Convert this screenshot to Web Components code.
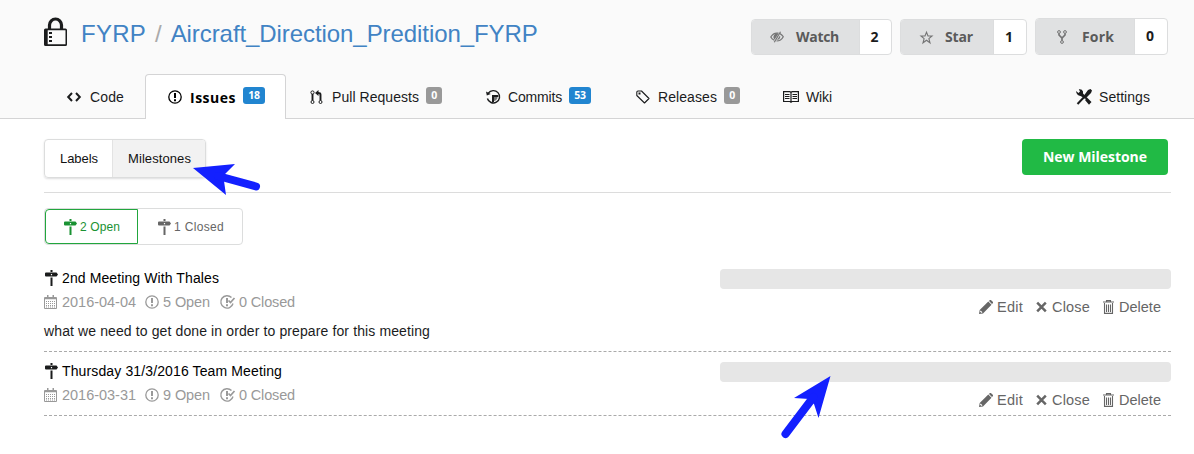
<!DOCTYPE html>
<html lang="en"><head><meta charset="utf-8"><title>Milestones</title>
<style>body{margin:0;background:#fff;font-family:"Liberation Sans",Arial,sans-serif;color:#1b1c1d;overflow:hidden}</style></head>
<body><milestones-page></milestones-page>
<script>
const define=(name,html,setup)=>customElements.define(name,class extends HTMLElement{
  connectedCallback(){
    if(this.shadowRoot)return;
    const t=document.createElement('template');t.innerHTML=html;
    this.attachShadow({mode:'open'}).append(t.content.cloneNode(true));
    if(setup)setup(this,this.shadowRoot);
  }
});
const ring='<circle cx="7" cy="7" r="6.2" fill="none" stroke="currentColor" stroke-width="1.3"/>';
const icons={
lock:[23,29,'<path d="M5.500 12V8a6 6 0 0 1 12 0V12" fill="none" stroke="currentColor" stroke-width="3.200"/><path fill-rule="evenodd" d="M1.500 11.500h20a1.500 1.500 0 0 1 1.500 1.500v14.500a1.500 1.500 0 0 1-1.500 1.500h-20a1.500 1.500 0 0 1-1.500-1.500V13a1.500 1.500 0 0 1 1.500-1.500zM3.700 13.200v14h17.800v-14z"/><path d="M5 15h3v2H5zM5 19h3v2H5zM5 23h3v2H5z"/>'],
code:[14,10,'<path d="M5 1 1.200 5 5 9M9 1l3.800 4L9 9" fill="none" stroke="currentColor" stroke-width="2"/>'],
issue:[14,14,ring+'<path d="M6 3h2v5H6zM6 9.200h2v2H6z"/>'],
closed:[15,14,'<path d="M11.500 2.600A6.200 6.200 0 1 0 13 8.500" fill="none" stroke="currentColor" stroke-width="1.400"/><path d="M6 3h2v5H6zM6 9.200h2v2H6z"/><path d="m8.500 5.500 2 2L14.500 3" fill="none" stroke="currentColor" stroke-width="1.700"/>'],
pull:[13,14,'<g fill="none" stroke="currentColor"><circle cx="2.500" cy="2.500" r="1.600"/><circle cx="2.500" cy="12" r="1.500"/><circle cx="10.500" cy="12" r="1.500"/><path stroke-width="1.900" d="M2.500 4v6.500M10.500 10.500V4.500Q10.500 3 8 3"/></g><path d="M8.500 0v6L5 3z"/>'],
history:[15,14,'<path d="M2.300 3.200A6.200 6.200 0 1 1 1.400 8.500" fill="none" stroke="currentColor" stroke-width="1.400"/><path d="M0 1.500l.8 4 4-1.500zM6 5h6.300v2H8v5H6z"/><path d="M8 7h3.500Q11.500 10 8 11z" opacity=".6"/>'],
tag:[14,14,'<path d="M.8 2.300Q.8 1 2 1H5.500L13 8.500 8.500 13 .8 5.500z" fill="none" stroke="currentColor" stroke-width="1.100" stroke-linejoin="round"/><path d="M2.500 2.500h2v2h-2z"/>'],
book:[16,12,'<path d="M.6.700H7L8 1.500 9 .700h6.400v9.800H9l-1 .8-1-.8H.6zM8 1.500v10" fill="none" stroke="currentColor" stroke-width="1.200"/><path d="M2 3.500h4.500M2 5.500h4.500M2 7.500h4.500M9.500 3.500H14M9.500 5.500H14M9.500 7.500H14" stroke="currentColor"/>'],
tools:[16,16,'<path d="M1.500 15 13 3" stroke="currentColor" stroke-width="2"/><path d="m12 1 2.500-1L16 1.500 15 4l-6 6-2-2zM0 2l2.500 2L4 2.500 2.800.300Q6-.3 7 2.500v2L15.500 13 13 15.800 9 11l1-1L4.500 7Q.5 6.500 0 2z"/>'],
eye:[14,10,'<path d="M8.500 1.200Q3.500.2.800 5q1 2 3.500 3.200M10 1.600q2 1 3.300 3.200Q11 9 6.500 9" fill="none" stroke="currentColor" stroke-width="1.200"/><path d="M8.500 1.800A3.500 3.500 0 0 0 4.600 7.500zM10 3.500A3.200 3.200 0 0 1 7 8z"/><path d="M4.300 10.300 10.500-.3" stroke="currentColor" stroke-width="1.200"/>'],
star:[13,13,'<path d="M6.500 1.300 8 5h4L8.900 7.600 10 11.800 6.500 9.300 3 11.800l1.100-4.200L1 5h4z" fill="none" stroke="currentColor" stroke-width="1.100"/>'],
fork:[10,14,'<g fill="none" stroke="currentColor"><circle cx="2" cy="2" r="1.400"/><circle cx="8" cy="2" r="1.400"/><circle cx="5" cy="12" r="1.400"/><path stroke-width="1.700" d="M2 3.500V5l3 3 3-3V3.500M5 8v2.500"/></g>'],
sign:[13,16,'<path fill-rule="evenodd" d="M5.500 0h2v2h-2zM1 2.600h10.500L13 4.500l-1.500 2H1Q0 6.500 0 5.500v-2Q0 2.600 1 2.600zM5.900 3.900v1.300h1.200V3.900zM5.500 7.500h2V16h-2z"/>'],
calendar:[13,14,'<path d="M.5 2.500h12v11H.5z" fill="none" stroke="currentColor"/><path d="M1 3h11v1.200H1zM3 0h1.500v3H3zM8.500 0H10v3H8.500z"/><path d="M2 6.500h9M2 8.500h9M2 10.500h9M2 12h9" stroke="currentColor" stroke-dasharray="1 1"/>'],
pencil:[14,14,'<path d="m9.300 1.500 3.200 3.200-8.500 8.800L0 14l.7-4zM10 .9l.9-.9h1L14 2v.9l-1 1z"/><path d="M1.300 11 3 12.700" stroke="#fff" stroke-width="1.200"/>'],
x:[11,10,'<path d="m1.200.7 8.600 8.600M9.800.7 1.200 9.300" stroke="currentColor" stroke-width="2.500"/>'],
trash:[11,14,'<path d="M0 2h11M3.500 2V.6h4V2M1.500 3v10.400h8V3M3.500 4.500v7.500M5.500 4.500v7.500M7.500 4.500v7.500" fill="none" stroke="currentColor" stroke-width="1.100"/>']
};
define('ui-icon','<style>:host{display:block;flex:none}svg{display:block;overflow:visible;fill:currentColor}</style>',(h,r)=>{
  const [w,ht,p]=icons[h.getAttribute('name')];
  r.innerHTML+=`<svg width="${w}" height="${ht}" viewBox="0 0 ${w} ${ht}">${p}</svg>`;
});
/* One line of text tracked so that it fills its column. */
define('fit-text','<style>:host{display:block;flex:none;white-space:nowrap}span{display:inline-block}</style><span><slot></slot></span>',(h,r)=>{
  const w=+h.getAttribute('w'),s=r.querySelector('span');
  h.style.width=w+'px';
  const n=h.textContent.length;
  s.style.letterSpacing=((w-s.getBoundingClientRect().width)/n)+'px';
});
define('count-badge','<style>:host{display:block;flex:none;box-sizing:border-box;height:17px;border-radius:3px;background:#999;color:#fff;font:bold 10.5px/17px "Open Sans","Noto Sans",sans-serif;letter-spacing:-.3px;text-align:center;width:16px}:host([hot]){background:#2185d0;width:22px}</style><slot></slot>');
define('nav-tab',`<style>:host{display:flex;box-sizing:border-box;height:44px;font-size:14px;line-height:17px;align-items:flex-start;padding:15px 0 0 24px;flex:none}
:host([active]){height:45px;background:#fff;border:1px solid #d4d4d5;border-bottom:0;border-radius:4px 4px 0 0;font:bold 14px/17px "Open Sans","Noto Sans",sans-serif;color:#000;padding:14px 0 0 22px}
.t{margin-left:7px}</style><div class="t"><slot></slot></div><slot name="badge"></slot>`,(h,r)=>{
  const n=document.createElement('ui-icon'),k=h.getAttribute('icon');
  n.setAttribute('name',k);n.style.marginTop=(16-icons[k][1])/2+'px';
  r.querySelector('.t').before(n);
});
define('count-button',`<style>:host{display:flex;box-sizing:border-box;height:36px;border-radius:4px;border:1px solid #dcddde;background:#fff;font:bold 14px/34px "Open Sans","Noto Sans",sans-serif;overflow:hidden}
.l{display:flex;align-items:center;background:#e0e1e2;color:#5a5a5a;box-sizing:border-box}.n{flex:1;text-align:center;border-left:1px solid #dcddde;padding-right:2px}</style><div class="l"><slot></slot></div><div class="n"><slot name="count"></slot></div>`,(h,r)=>{
  r.querySelector('.l').style.width=h.getAttribute('left')+'px';
});
define('repo-header',`<style>:host{display:block;box-sizing:border-box;height:119px;background:#fafafa;border-bottom:1px solid #d4d4d5;padding:17px 23px 0 44px}
.top{display:flex;height:57px;align-items:flex-start}.title{display:flex;color:#4183c4;font-size:24px;line-height:28px;padding-top:3px}.sl{color:#aaa;margin:0 9px 0 9px}
ui-icon.lk{margin:0 14px 0 0}.btns{margin-left:auto;display:flex;gap:8px;padding:2px 3px 0 0}
nav{display:flex}.set{margin-left:auto;margin-right:21px}
count-button ui-icon{margin-left:18px;opacity:.8}count-button fit-text{margin-left:12px}
nav-tab count-badge{margin:-2px 0 0 7px}
</style>
<div class="top"><ui-icon class="lk" name="lock"></ui-icon><div class="title"><fit-text w="65">FYRP</fit-text><span class="sl">/</span><fit-text w="367">Aircraft_Direction_Predition_FYRP</fit-text></div>
<div class="btns">
<count-button left="107" style="width:141px"><ui-icon name="eye"></ui-icon><fit-text w="43">Watch</fit-text><span slot="count">2</span></count-button>
<count-button left="92" style="width:127px"><ui-icon name="star" style="margin-left:19px"></ui-icon><fit-text w="28">Star</fit-text><span slot="count">1</span></count-button>
<count-button left="98" style="width:133px;height:37px;margin-top:-1px"><ui-icon name="fork" style="margin-left:21px"></ui-icon><fit-text w="32" style="margin-left:15px">Fork</fit-text><span slot="count">0</span></count-button>
</div></div>
<nav><nav-tab icon="code" style="width:101px;padding-left:23px"><fit-text w="34" style="margin-left:2px">Code</fit-text></nav-tab>
<nav-tab icon="issue" active style="width:141px"><fit-text w="46" style="margin-left:1px">Issues</fit-text><count-badge slot="badge" hot>18</count-badge></nav-tab>
<nav-tab icon="pull" style="width:178px"><fit-text w="87" style="margin-left:2px">Pull Requests</fit-text><count-badge slot="badge">0</count-badge></nav-tab>
<nav-tab icon="history" style="width:149px;padding-left:22px"><fit-text w="54">Commits</fit-text><count-badge slot="badge" hot>53</count-badge></nav-tab>
<nav-tab icon="tag" style="width:150px;padding-left:23px"><fit-text w="59" style="margin-left:1px">Releases</fit-text><count-badge slot="badge">0</count-badge></nav-tab>
<nav-tab icon="book" style="padding-left:20px"><fit-text w="26">Wiki</fit-text></nav-tab>
<nav-tab class="set" icon="tools" style="padding-left:0"><fit-text w="51">Settings</fit-text></nav-tab></nav>`);
define('section-bar',`<style>:host{display:flex;height:53px;border-bottom:1px solid #dcdcdc;justify-content:space-between;align-items:flex-start}
.m{display:flex;box-sizing:border-box;width:162px;height:39px;border:1px solid #dcdddd;border-radius:4px;box-shadow:0 1px 2px #22242626;font-size:13px;line-height:38px;overflow:hidden;color:#111}
.a{width:67px;box-sizing:border-box;padding-left:15px}.b{flex:1;background:#f2f2f2;border-left:1px solid #e3e3e3;padding-left:15px}
button{all:unset;box-sizing:border-box;width:146px;height:36px;margin-right:3px;border-radius:4px;background:#21ba45;color:#fff;font:bold 14px/36px "Open Sans","Noto Sans",sans-serif;padding-left:21px}</style>
<div class="m"><div class="a"><fit-text w="38">Labels</fit-text></div><div class="b"><fit-text w="63">Milestones</fit-text></div></div>
<button><fit-text w="104">New Milestone</fit-text></button>`);
define('state-filter',`<style>:host{display:flex;box-sizing:border-box;width:199px;height:37px;margin-top:15px;border:1px solid #dcdddd;border-radius:4px;font-size:12px;line-height:34px;color:#666}
.o,.c{display:flex;align-items:center;box-sizing:border-box}.o{width:93px;height:35px;border:1px solid #21a63d;border-radius:4px 0 0 4px;color:#1a9233;padding-left:18px}.c{padding-left:20px;height:35px}fit-text{margin-left:3px}</style>
<div class="o"><ui-icon name="sign"></ui-icon><fit-text w="40">2 Open</fit-text></div><div class="c"><ui-icon name="sign"></ui-icon><fit-text w="50">1 Closed</fit-text></div>`);
define('milestone-row',`<style>:host{display:block;box-sizing:border-box;border-bottom:1px dashed #aaa}
.g{display:flex;justify-content:space-between}.t,.meta,.act{display:flex;align-items:center}.t{height:22px;font-size:14px;line-height:18px;color:#000;gap:4px}.t ui-icon{color:#1b1c1d}
.meta{height:25px;font-size:14.5px;color:#999}.meta fit-text,.act fit-text{margin-left:4px;line-height:18px}
.bar{width:451px;height:20px;border-radius:4px;background:#e6e6e6;margin-top:2px}
.act{height:24px;justify-content:flex-end;padding:6px 10px 0 0;font-size:14.5px;color:#666}
.act ui-icon+fit-text+ui-icon{margin-left:13px}.act ui-icon+fit-text.f{margin-left:5px}</style>
<div class="g"><div><div class="t"><ui-icon name="sign" style="margin-left:1px"></ui-icon><slot name="title"></slot></div>
<div class="meta"><ui-icon name="calendar"></ui-icon><slot name="date"></slot><ui-icon name="issue" style="margin-left:9px"></ui-icon><slot name="open"></slot><ui-icon name="closed" style="margin-left:10px"></ui-icon><fit-text w="56">0 Closed</fit-text></div></div>
<div><div class="bar"></div><div class="act"><ui-icon name="pencil"></ui-icon><fit-text w="26">Edit</fit-text><ui-icon name="x"></ui-icon><fit-text class="f" w="38">Close</fit-text><ui-icon name="trash"></ui-icon><fit-text class="f" w="42">Delete</fit-text></div></div></div><slot></slot>`);
define('pointer-arrow','<style>:host{position:absolute;left:0;top:0;pointer-events:none}svg{display:block}</style><svg width="1194" height="454" fill="#1320ff" stroke="#1320ff"><path stroke="none" d="M193 168 235 164 225 174 224 181 226 195z"/><path d="m218 176 38 10.500" stroke-width="8" stroke-linecap="round"/><path stroke="none" d="m830.500 376-36.500 22 15 1 5 5 4.500 14z"/><path d="m785.500 434 28-37" stroke-width="8" stroke-linecap="round"/></svg>');
define('milestones-page',`<style>:host{display:block;position:relative;width:1194px;height:454px;overflow:hidden}main{padding:20px 23px 0 44px}.rows{margin-top:22px}.d{font-size:14px;line-height:18px;padding-top:3px}
milestone-row [slot=date],milestone-row [slot=open]{margin-left:5px;font-size:14.5px;line-height:18px}milestone-row [slot=open]{margin-left:4px}</style>
<repo-header></repo-header><main><section-bar></section-bar><state-filter></state-filter>
<div class="rows"><milestone-row style="height:85px"><fit-text slot="title" w="157">2nd Meeting With Thales</fit-text><fit-text slot="date" w="74">2016-04-04</fit-text><fit-text slot="open" w="47">5 Open</fit-text><div class="d"><fit-text w="386">what we need to get done in order to prepare for this meeting</fit-text></div></milestone-row>
<milestone-row style="height:64px;padding-top:8px"><fit-text slot="title" w="220">Thursday 31/3/2016 Team Meeting</fit-text><fit-text slot="date" w="74">2016-03-31</fit-text><fit-text slot="open" w="47">9 Open</fit-text></milestone-row></div></main><pointer-arrow></pointer-arrow>`);
</script></body></html>
